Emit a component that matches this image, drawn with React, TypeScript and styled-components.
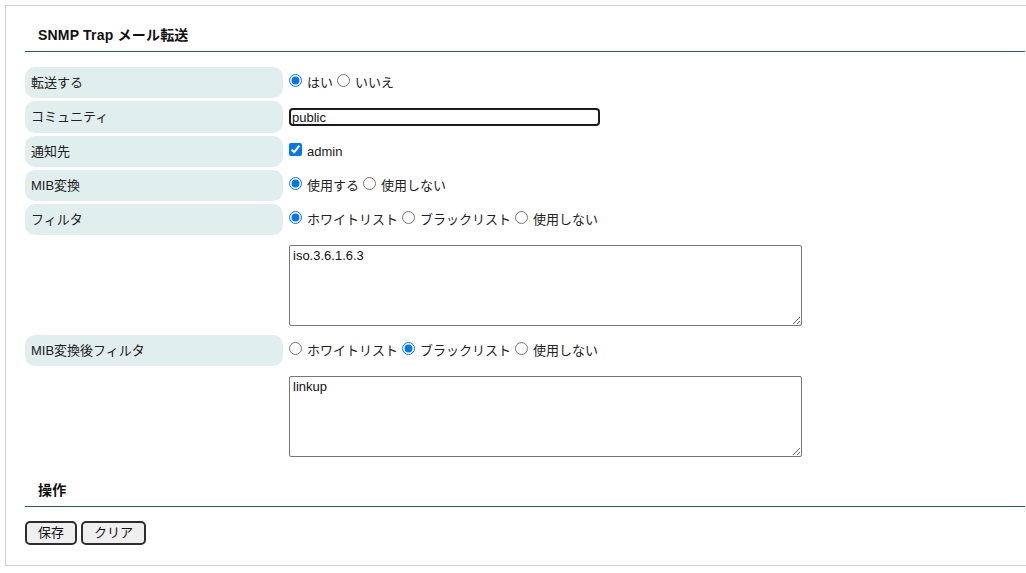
import React from "react";
import styled, { createGlobalStyle } from "styled-components";

const GlobalStyle = createGlobalStyle`
    html, body {
        margin: 0;
        padding: 0;
        overflow: hidden;
        background: #fff;
    }
    body {
        font-family: "Liberation Sans", "Noto Sans CJK JP", sans-serif;
        font-size: 13px;
        color: #222;
    }
`;

const Panel = styled.div`
    margin: 5px 0 0 5px;
    width: calc(100vw - 5px);
    box-sizing: border-box;
    border: 1px solid #d2d2d2;
    border-right: none;
    padding: 20px 1px 20px 19px;
`;

const SectionTitle = styled.h3<{ $gap?: number }>`
    margin: ${(p) => p.$gap ?? 0}px 0 0 0;
    padding: 0 0 7px 13px;
    font-size: 14px;
    font-weight: bold;
    line-height: 18px;
    letter-spacing: 0.2px;
    color: #111;
    border-bottom: 1px solid #2f5e5a;
`;

const Form = styled.div`
    margin-top: 15px;
    display: flex;
    flex-direction: column;
    gap: 3px;
`;

const Row = styled.div<{ $height?: number }>`
    display: grid;
    grid-template-columns: 258px 1fr;
    column-gap: 1px;
    height: ${(p) => p.$height ?? 31}px;
`;

const LabelCell = styled.div`
    background: #e0eeed;
    border-radius: 10px;
    padding-left: 6px;
    display: flex;
    align-items: center;
    line-height: 16px;
    color: #222;
`;

const EmptyCell = styled.div``;

const ValueCell = styled.div<{ $top?: boolean }>`
    display: flex;
    align-items: ${(p) => (p.$top ? "flex-start" : "center")};
    padding-left: 5px;
    line-height: 16px;
`;

const Option = styled.label`
    display: inline-flex;
    align-items: center;
    margin-right: 4px;
    white-space: nowrap;
`;

const Choice = styled.input`
    width: 13px;
    height: 13px;
    margin: 0 5px 0 0;
    transform: translateY(-2px);
    accent-color: #0075ff;
`;

const TextField = styled.input`
    box-sizing: border-box;
    width: 311px;
    height: 18px;
    margin: 0;
    padding: 0 1px;
    border: 2px solid #1b1b1b;
    border-radius: 4px;
    font-family: "Liberation Sans", "Noto Sans CJK JP", sans-serif;
    font-size: 13px;
    color: #111;
    outline: none;
`;

const Area = styled.textarea`
    box-sizing: border-box;
    width: 513px;
    height: 81px;
    margin: 7px 0 0 0;
    padding: 2px 3px;
    border: 1px solid #767676;
    border-radius: 2px;
    font-family: "Liberation Sans", "Noto Sans CJK JP", sans-serif;
    font-size: 13px;
    line-height: 15px;
    color: #111;
`;

const Actions = styled.div`
    margin-top: 14px;
    display: flex;
    gap: 4px;
`;

const Button = styled.button`
    height: 24px;
    box-sizing: border-box;
    padding: 0 11px;
    border: 2px solid #2e2e2e;
    border-radius: 5px;
    background: #efefef;
    font-family: "Liberation Sans", "Noto Sans CJK JP", sans-serif;
    font-size: 13px;
    color: #111;
    line-height: 18px;
`;

type Opt = { label: string; checked?: boolean };

const RadioGroup: React.FC<{ name: string; options: Opt[] }> = ({ name, options }) => (
    <>
        {options.map((o) => (
            <Option key={o.label}>
                <Choice type="radio" name={name} defaultChecked={o.checked} />
                {o.label}
            </Option>
        ))}
    </>
);

const listOpts = (sel: number): Opt[] =>
    ["ホワイトリスト", "ブラックリスト", "使用しない"].map((label, i) => ({ label, checked: i === sel }));

const App: React.FC = () => {
    return (
        <>
            <GlobalStyle />
            <Panel>
                <SectionTitle>SNMP Trap メール転送</SectionTitle>
                <Form>
                    <Row>
                        <LabelCell>転送する</LabelCell>
                        <ValueCell>
                            <RadioGroup name="forward" options={[{ label: "はい", checked: true }, { label: "いいえ" }]} />
                        </ValueCell>
                    </Row>
                    <Row $height={32}>
                        <LabelCell>コミュニティ</LabelCell>
                        <ValueCell>
                            <TextField type="text" defaultValue="public" />
                        </ValueCell>
                    </Row>
                    <Row>
                        <LabelCell>通知先</LabelCell>
                        <ValueCell>
                            <Option>
                                <Choice type="checkbox" defaultChecked />
                                admin
                            </Option>
                        </ValueCell>
                    </Row>
                    <Row>
                        <LabelCell>MIB変換</LabelCell>
                        <ValueCell>
                            <RadioGroup name="mib" options={[{ label: "使用する", checked: true }, { label: "使用しない" }]} />
                        </ValueCell>
                    </Row>
                    <Row>
                        <LabelCell>フィルタ</LabelCell>
                        <ValueCell>
                            <RadioGroup name="filter" options={listOpts(0)} />
                        </ValueCell>
                    </Row>
                    <Row $height={94}>
                        <EmptyCell />
                        <ValueCell $top>
                            <Area defaultValue="iso.3.6.1.6.3" />
                        </ValueCell>
                    </Row>
                    <Row>
                        <LabelCell>MIB変換後フィルタ</LabelCell>
                        <ValueCell>
                            <RadioGroup name="filter2" options={listOpts(1)} />
                        </ValueCell>
                    </Row>
                    <Row $height={94}>
                        <EmptyCell />
                        <ValueCell $top>
                            <Area defaultValue="linkup" />
                        </ValueCell>
                    </Row>
                </Form>
                <SectionTitle $gap={18}>操作</SectionTitle>
                <Actions>
                    <Button type="button">保存</Button>
                    <Button type="button">クリア</Button>
                </Actions>
            </Panel>
        </>
    );
};

export default App;
